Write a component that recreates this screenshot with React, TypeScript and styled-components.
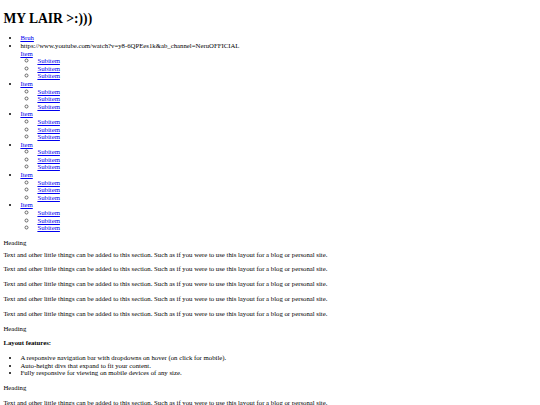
import React from "react";
import styled, { createGlobalStyle } from "styled-components";

// The page is a plain, unstyled HTML document shown at ~0.42 scale,
// so the usual browser defaults are reproduced here at that scale.
const GlobalStyle = createGlobalStyle`
  html {
    font-size: 6.75px;
    background: #fff;
  }
  body {
    margin: 3.4px;
    font-family: "Liberation Serif", "Times New Roman", serif;
    font-size: 1rem;
    line-height: 7.6px;
    color: #000;
  }
`;

const Title = styled.h1`
  font-size: 13.6px;
  line-height: 16px;
  font-weight: bold;
  margin: 7.5px 0;
`;

const NavList = styled.ul`
  list-style: disc;
  margin: 7.5px 0 6.6px;
  padding-left: 17px;
`;

const SubList = styled.ul`
  list-style: circle;
  margin: 0;
  padding-left: 17px;

  li::marker {
    font-size: 8.5px;
    color: #666;
  }
`;

const NavItem = styled.li`
  display: list-item;
`;

const NavLink = styled.a`
  color: #0000ee;
  text-decoration: underline;
  cursor: pointer;
`;

const ItemBlock = styled.div``;

const Heading = styled.p`
  margin: 7.2px 0 4px;
`;

const Para = styled.p<{ $bold?: boolean; $tight?: boolean }>`
  margin: ${({ $tight }) => ($tight ? "4px" : "7.2px")} 0 7.2px;
  font-weight: ${({ $bold }) => ($bold ? "bold" : "normal")};
`;

const FeatureList = styled.ul`
  list-style: disc;
  margin: 7.2px 0;
  padding-left: 17px;
`;

const BLURB =
  "Text and other little things can be added to this section. Such as if you were to use this layout for a blog or personal site.";

const Subitems = () => (
  <SubList>
    {[0, 1, 2].map((i) => (
      <li key={i}>
        <NavLink href="#">Subitem</NavLink>
      </li>
    ))}
  </SubList>
);

export default function App() {
  return (
    <>
      <GlobalStyle />
      <Title>MY LAIR &gt;:)))</Title>

      <NavList>
        <NavItem>
          <NavLink href="#">Bruh</NavLink>
        </NavItem>
        <NavItem>
          https://www.youtube.com/watch?v=y8-6QPEes1k&amp;ab_channel=NeruOFFICIAL
          <ItemBlock>
            <NavLink href="#">Item</NavLink>
            <Subitems />
          </ItemBlock>
        </NavItem>
        {[0, 1, 2, 3, 4].map((i) => (
          <NavItem key={i}>
            <NavLink href="#">Item</NavLink>
            <Subitems />
          </NavItem>
        ))}
      </NavList>

      <Heading>Heading</Heading>
      {[0, 1, 2, 3, 4].map((i) => (
        <Para key={i} $tight={i === 0}>
          {BLURB}
        </Para>
      ))}

      <Heading>Heading</Heading>
      <Para $bold>Layout features:</Para>
      <FeatureList>
        <li>A responsive navigation bar with dropdowns on hover (on click for mobile).</li>
        <li>Auto-height divs that expand to fit your content.</li>
        <li>Fully responsive for viewing on mobile devices of any size.</li>
      </FeatureList>

      <Heading>Heading</Heading>
      <Para>{BLURB}</Para>
    </>
  );
}
